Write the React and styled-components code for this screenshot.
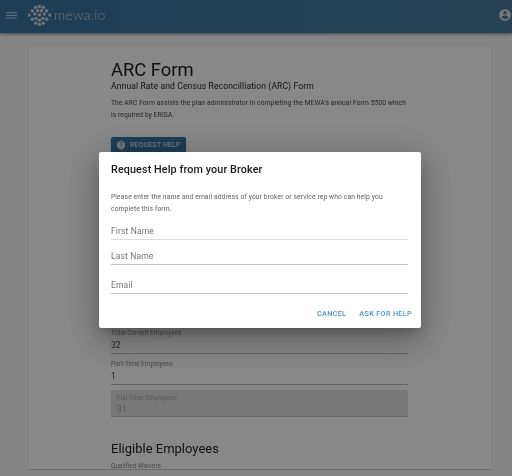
import React from 'react';
import styled, { createGlobalStyle } from 'styled-components';

const GlobalStyle = createGlobalStyle`
    html, body {
        margin: 0;
        height: 476px;
        overflow: hidden;
        background: #f4f4f4;
        font-family: Roboto, "Liberation Sans", sans-serif;
    }
`;

const Page = styled.div`
    width: 512px;
    height: 476px;
    display: flex;
    flex-direction: column;
    overflow: hidden;
    filter: blur(0.4px);
`;

const Header = styled.header`
    height: 33px;
    flex: none;
    display: flex;
    align-items: center;
    padding: 0 0 3px 6px;
    box-sizing: border-box;
    background: linear-gradient(90deg, #3773a0, #467a9c);
    box-shadow: 0 1px 3px rgba(0, 0, 0, 0.5);
`;

const Brand = styled.div`
    display: flex;
    align-items: center;
    margin-left: 11px;
    flex: 1;
    color: #ccd6dd;
`;

const BrandName = styled.span`
    font-family: Lato, "Open Sans", sans-serif;
    font-size: 14px;
    font-weight: 300;
    letter-spacing: 0.2px;
    margin-left: 3px;
    margin-top: -1px;
`;

const BrandDot = styled.span`
    width: 1.5px;
    height: 1.5px;
    margin: 9px 0 0 3px;
    background: #ccd6dd;
    border-radius: 50%;
`;

const Card = styled.main`
    width: 464px;
    height: 424px;
    margin: 13px 0 0 28px;
    padding: 12px 83px 0 82px;
    box-sizing: border-box;
    background: #fbfbfb;
    border: 1px solid #f0f0f0;
    border-bottom: 1px solid #c8c8c8;
    overflow: hidden;
    color: #1c1c1c;
`;

const Title = styled.h1`
    margin: 0;
    font-size: 18.4px;
    line-height: 21px;
    font-weight: 400;
`;

const Subtitle = styled.h2`
    margin: 1px 0 0;
    font-size: 8.6px;
    line-height: 11px;
    font-weight: 400;
    letter-spacing: 0.1px;
`;

const Body = styled.p`
    margin: 6px 0 0;
    font-size: 6.65px;
    line-height: 11.7px;
    letter-spacing: 0.12px;
    color: #444;
`;

const HelpButton = styled.button`
    display: flex;
    align-items: center;
    gap: 4px;
    width: 75px;
    height: 16px;
    margin-top: 16px;
    padding: 0 0 0 5px;
    border: 0;
    border-radius: 2px;
    background: #3773a0;
    color: #d6dfe6;
    font: 500 6.8px Roboto, sans-serif;
    letter-spacing: 0.25px;
    white-space: nowrap;
    box-shadow: 0 1px 2px rgba(0, 0, 0, 0.3);
`;

const HiddenFields = styled.div`
    height: 175px;
`;

const Field = styled.div`
    height: 26px;
    margin-bottom: 5px;
    box-sizing: border-box;
    border-bottom: 1px solid #b4b4b4;
    padding-top: 1px;
`;

const FieldLabel = styled.div`
    font-size: 6.5px;
    line-height: 9px;
    color: #888;
`;

const FieldValue = styled.div`
    font-size: 8.6px;
    line-height: 11px;
    margin-top: 1.5px;
    color: #444;
`;

const FilledField = styled.div`
    height: 26.5px;
    margin-top: 1px;
    padding: 4px 6px 0;
    box-sizing: border-box;
    background: #dcdcdc;
    border-radius: 2px 2px 0 0;
    border-bottom: 1px solid #c0c0c0;
    ${FieldLabel} { color: #a0a0a0; }
    ${FieldValue} { color: #a0a0a0; margin-top: 0.5px; }
`;

const SectionTitle = styled.h3`
    margin: 23.5px 0 0;
    font-size: 13px;
    line-height: 18px;
    font-weight: 400;
`;

const QualifiedLabel = styled(FieldLabel)`
    margin-top: 3.5px;
`;

const Scrim = styled.div`
    position: fixed;
    inset: 0;
    background: rgba(0, 0, 0, 0.46);
`;

const Dialog = styled.section`
    position: absolute;
    left: 99px;
    top: 152px;
    width: 322px;
    height: 176px;
    box-sizing: border-box;
    padding: 11px 9px 0 12px;
    background: #fff;
    border-radius: 2px;
    box-shadow: 0 7px 12px -4px rgba(0, 0, 0, 0.25), 0 14px 30px 2px rgba(0, 0, 0, 0.16), 0 5px 36px 4px rgba(0, 0, 0, 0.12);
`;

const DialogTitle = styled.h2`
    margin: 0;
    font-size: 10.8px;
    line-height: 14px;
    font-weight: 500;
    letter-spacing: 0.1px;
    color: #1b1b1b;
`;

const DialogText = styled.p`
    margin: 15px 0 0;
    width: 290px;
    font-size: 6.7px;
    line-height: 11.6px;
    letter-spacing: 0.13px;
    color: #5e5e5e;
`;

const InputRow = styled.div`
    width: 297px;
    height: ${(p) => p.$height}px;
    box-sizing: border-box;
    display: flex;
    align-items: flex-end;
    padding-bottom: 2.5px;
    border-bottom: 1px solid ${(p) => p.$line};
    font-size: 8.6px;
    line-height: 12px;
    letter-spacing: 0.1px;
    color: #777;
`;

const Actions = styled.div`
    display: flex;
    justify-content: flex-end;
    gap: 13px;
    margin-top: 15px;
`;

const ActionButton = styled.button`
    padding: 0;
    border: 0;
    background: none;
    font: 500 7.3px/10px Roboto, sans-serif;
    letter-spacing: 0.3px;
    color: #4a94cc;
`;

const DOTS = [
    [0, -9.5], [4, -8.5], [-4, -8.5], [7.5, -5], [-7.5, -5], [11, -0.5], [-11, -0.5], [7.5, 4], [-7.5, 4], [4, 8], [-4, 8], [0, 9.5],
    [2, -5], [-2, -5], [5, -1.5], [-5, -1.5], [3.5, 3], [-3.5, 3], [0, 5], [0, -0.5],
];

const LogoMark = () => (
    <svg width="23" height="21" viewBox="-12 -11 24 22" fill="#ccd6dd">
        {DOTS.map(([x, y]) => (
            <circle key={`${x}-${y}`} cx={x} cy={y} r="1.8" />
        ))}
    </svg>
);

const MenuIcon = () => (
    <svg width="11" height="7" viewBox="0 0 11 7" stroke="#d8dfe4" strokeWidth="0.9">
        <path d="M0 .7h11M0 3.4h11M0 6.1h11" />
    </svg>
);

const AccountIcon = () => (
    <svg width="14" height="14" viewBox="0 0 24 24" fill="#d8dfe4">
        <path d="M12 2C6.48 2 2 6.48 2 12s4.48 10 10 10 10-4.48 10-10S17.52 2 12 2zm0 3c1.66 0 3 1.34 3 3s-1.34 3-3 3-3-1.34-3-3 1.34-3 3-3zm0 14.2c-2.5 0-4.71-1.28-6-3.22.03-1.99 4-3.08 6-3.08s5.97 1.09 6 3.08c-1.29 1.94-3.5 3.22-6 3.22z" />
    </svg>
);

const HelpIcon = () => (
    <svg width="10" height="10" viewBox="0 0 24 24" fill="#d6dfe6">
        <path d="M12 2C6.48 2 2 6.48 2 12c0 5 3.7 9.2 8.5 9.9L12 24l1.5-2.1C18.3 21.2 22 17 22 12c0-5.52-4.48-10-10-10zm1 16h-2v-2h2v2zm2.1-7.7l-.9.9c-.7.7-1.2 1.3-1.2 2.8h-2v-.5c0-1.1.5-2.1 1.2-2.8l1.2-1.3c.4-.3.6-.8.6-1.4 0-1.1-.9-2-2-2s-2 .9-2 2H8c0-2.2 1.8-4 4-4s4 1.8 4 4c0 .9-.4 1.7-.9 2.3z" />
    </svg>
);

const App = () => (
    <Page>
        <GlobalStyle />
        <Header>
            <MenuIcon />
            <Brand>
                <LogoMark />
                <BrandName>mewa.io</BrandName>
                <BrandDot />
            </Brand>
            <AccountIcon />
        </Header>
        <Card>
            <Title>ARC Form</Title>
            <Subtitle>Annual Rate and Census Reconcilliation (ARC) Form</Subtitle>
            <Body>
                The ARC Form assists the plan administrator in completing the MEWA's annual Form 5500 which
                is required by ERISA.
            </Body>
            <HelpButton>
                <HelpIcon />
                REQUEST HELP
            </HelpButton>
            <HiddenFields />
            <Field>
                <FieldLabel>Total Current Employees</FieldLabel>
                <FieldValue>32</FieldValue>
            </Field>
            <Field>
                <FieldLabel>Part-Time Employees</FieldLabel>
                <FieldValue>1</FieldValue>
            </Field>
            <FilledField>
                <FieldLabel>Full-Time Employees</FieldLabel>
                <FieldValue>31</FieldValue>
            </FilledField>
            <SectionTitle>Eligible Employees</SectionTitle>
            <QualifiedLabel>Qualified Waivers</QualifiedLabel>
        </Card>
        <Scrim />
        <Dialog>
            <DialogTitle>Request Help from your Broker</DialogTitle>
            <DialogText>
                Please enter the name and email address of your broker or service rep who can help you
                complete this form.
            </DialogText>
            <InputRow $height={25} $line="#dcdcdc">First Name</InputRow>
            <InputRow $height={25} $line="#c4c4c4">Last Name</InputRow>
            <InputRow $height={29} $line="#c4c4c4">Email</InputRow>
            <Actions>
                <ActionButton>CANCEL</ActionButton>
                <ActionButton>ASK FOR HELP</ActionButton>
            </Actions>
        </Dialog>
    </Page>
);

export default App;
